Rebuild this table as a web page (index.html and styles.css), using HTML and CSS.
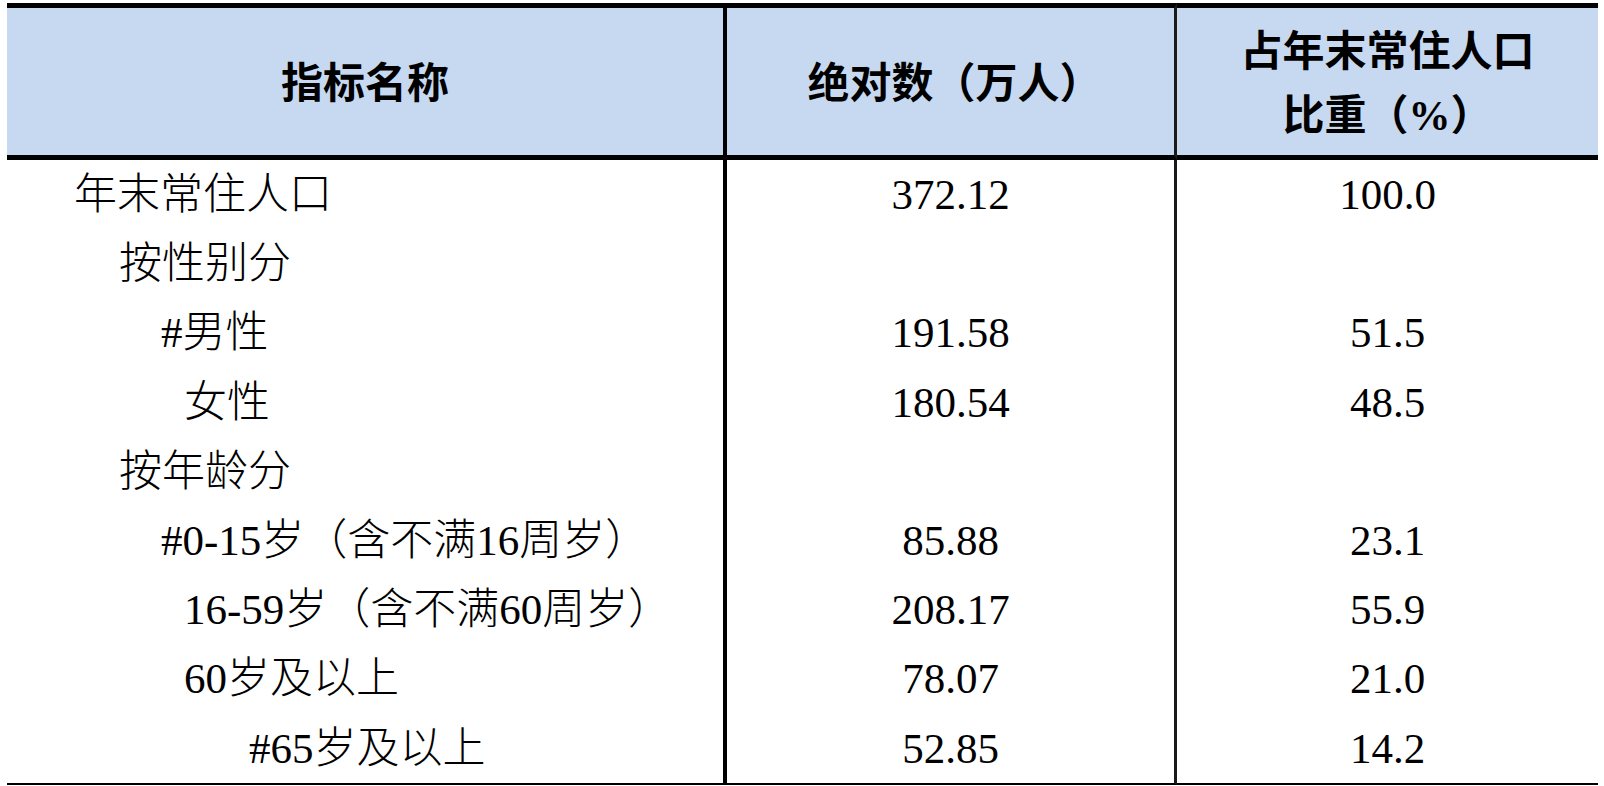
FILE: index.html
```html
<!DOCTYPE html>
<html lang="zh-CN">
<head>
<meta charset="utf-8">
<title>年末常住人口</title>
<link rel="stylesheet" href="styles.css">
</head>
<body>
<div class="sheet">
  <div class="grid">
    <div class="cell head c1">指标名称</div>
    <div class="cell head c2">绝对数（万人）</div>
    <div class="cell head c3"><span>占年末常住人口<br>比重（<b class="lat">%</b>）</span></div>

    <div class="cell c1 lv0">年末常住人口</div>
    <div class="cell c2 num">372.12</div>
    <div class="cell c3 num">100.0</div>

    <div class="cell c1 lv1">按性别分</div>
    <div class="cell c2 num"></div>
    <div class="cell c3 num"></div>

    <div class="cell c1 lv2h"><span class="lat">#</span>男性</div>
    <div class="cell c2 num">191.58</div>
    <div class="cell c3 num">51.5</div>

    <div class="cell c1 lv2">女性</div>
    <div class="cell c2 num">180.54</div>
    <div class="cell c3 num">48.5</div>

    <div class="cell c1 lv1">按年龄分</div>
    <div class="cell c2 num"></div>
    <div class="cell c3 num"></div>

    <div class="cell c1 lv2h"><span class="lat">#0-15</span>岁（含不满<span class="lat">16</span>周岁）</div>
    <div class="cell c2 num">85.88</div>
    <div class="cell c3 num">23.1</div>

    <div class="cell c1 lv2"><span class="lat">16-59</span>岁（含不满<span class="lat">60</span>周岁）</div>
    <div class="cell c2 num">208.17</div>
    <div class="cell c3 num">55.9</div>

    <div class="cell c1 lv2"><span class="lat">60</span>岁及以上</div>
    <div class="cell c2 num">78.07</div>
    <div class="cell c3 num">21.0</div>

    <div class="cell c1 lv3 last"><span class="lat">#65</span>岁及以上</div>
    <div class="cell c2 num last">52.85</div>
    <div class="cell c3 num last">14.2</div>
  </div>
</div>
</body>
</html>
```

FILE: styles.css
```css
html, body {
  margin: 0;
  padding: 0;
  background: #ffffff;
}

.sheet {
  padding: 3px 6px 0 7px;
}

.grid {
  display: grid;
  grid-template-columns: 720px 450px 421px;
  grid-template-rows: 157px repeat(8, 69.2px) 71.2px;
  font-family: "Liberation Serif", "Noto Sans CJK SC", serif;
  font-size: 43px;
  color: #000;
}

.cell {
  box-sizing: border-box;
  display: flex;
  align-items: center;
  white-space: nowrap;
  font-weight: 300;
  line-height: 1;
}

.c1 {
  border-right: 4px solid #000;
}

.c2 {
  border-right: 3px solid #1a1a1a;
}

.head {
  background: #c6d9f0;
  border-top: 5px solid #000;
  border-bottom: 5px solid #000;
  justify-content: center;
  text-align: center;
  font-weight: 700;
  font-size: 42px;
  line-height: 64px;
  padding-top: 4px;
}

.head.c2 {
  padding-left: 8px;
}

.lat {
  font-family: "Liberation Serif", serif;
  font-weight: 400;
}

.head .lat {
  font-weight: 700;
}

.num {
  justify-content: center;
  font-family: "Liberation Serif", serif;
  font-weight: 400;
}

.lv0 { padding-left: 67px; }
.lv1 { padding-left: 112px; }
.lv2h { padding-left: 154px; }
.lv2 { padding-left: 177px; }
.lv3 { padding-left: 242px; }

.last {
  border-bottom: 2px solid #000;
}
```
